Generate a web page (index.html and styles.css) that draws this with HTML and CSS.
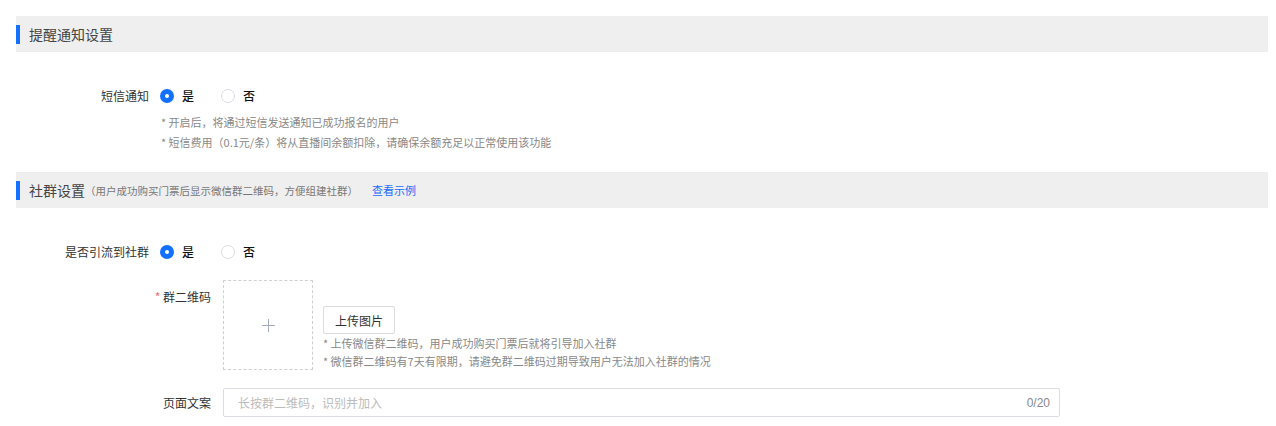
FILE: index.html
```html
<!DOCTYPE html>
<html lang="zh-CN">
<head>
    <meta charset="UTF-8">
    <meta name="viewport" content="width=device-width, initial-scale=1.0">
    <title>提醒与社群设置</title>
    <link rel="stylesheet" href="styles.css">
</head>
<body>
    <div class="section-head">
        <span class="section-title">提醒通知设置</span>
    </div>
    <div class="section-body first">
        <div class="row">
            <label class="label">短信通知</label>
            <div class="radios">
                <span class="radio checked"></span><span class="radio-text">是</span>
                <span class="radio"></span><span class="radio-text">否</span>
            </div>
        </div>
        <div class="tips tips-sms">
            <p>* 开启后，将通过短信发送通知已成功报名的用户</p>
            <p>* 短信费用（0.1元/条）将从直播间余额扣除，请确保余额充足以正常使用该功能</p>
        </div>
    </div>

    <div class="section-head">
        <span class="section-title">社群设置</span>
        <span class="section-sub">（用户成功购买门票后显示微信群二维码，方便组建社群）</span>
        <a class="section-link" href="#">查看示例</a>
    </div>
    <div class="section-body">
        <div class="row">
            <label class="label">是否引流到社群</label>
            <div class="radios">
                <span class="radio checked"></span><span class="radio-text">是</span>
                <span class="radio"></span><span class="radio-text">否</span>
            </div>
        </div>
        <div class="row upload-row">
            <label class="label wide"><span class="req">*</span> 群二维码</label>
            <div class="upload-box">
                <svg width="13" height="13" viewBox="0 0 13 13"><path d="M6.5 0v13M0 6.5h13" stroke="#a4abc0" stroke-width="1" fill="none"/></svg>
            </div>
            <div class="upload-side">
                <button type="button" class="btn">上传图片</button>
                <div class="tips tips-qr">
                    <p>* 上传微信群二维码，用户成功购买门票后就将引导加入社群</p>
                    <p>* 微信群二维码有7天有限期，请避免群二维码过期导致用户无法加入社群的情况</p>
                </div>
            </div>
        </div>
        <div class="row input-row">
            <label class="label wide">页面文案</label>
            <div class="text-input">
                <input type="text" placeholder="长按群二维码，识别并加入">
                <span class="count">0/20</span>
            </div>
        </div>
    </div>
</body>
</html>
```

FILE: styles.css
```css
body {
    margin: 0;
    padding: 16px 8px 0 16px;
    font-family: "Noto Sans CJK SC", "Noto Sans", sans-serif;
    color: #333;
    background: #fff;
}
p {
    margin: 0;
}
.section-head {
    display: flex;
    align-items: center;
    height: 36px;
    background: #efefef;
}
.section-head::before {
    content: "";
    width: 4px;
    height: 19px;
    background: #1470ff;
}
.section-title {
    margin-left: 9px;
    font-size: 14px;
    color: #444;
}
.section-sub {
    font-size: 10.5px;
    color: #777;
}
.section-link {
    margin-left: 14px;
    font-size: 11px;
    color: #1a6bff;
    text-decoration: none;
}
.section-body {
    padding-top: 34px;
}
.section-body.first {
    padding-bottom: 20px;
}
.row {
    display: flex;
    align-items: center;
    font-size: 12px;
    line-height: 20px;
}
.label {
    width: 133px;
    text-align: right;
    margin-right: 11px;
    color: #333;
}
.label.wide {
    width: 195px;
    margin-right: 12px;
}
.req {
    color: #f56c6c;
}
.radios {
    display: flex;
    align-items: center;
}
.radio {
    box-sizing: border-box;
    width: 14px;
    height: 14px;
    border: 1px solid #d9dbe3;
    border-radius: 50%;
    background: #fff;
}
.radio.checked {
    border: none;
    background: #1470ff;
    position: relative;
}
.radio.checked::after {
    content: "";
    position: absolute;
    left: 5px;
    top: 5px;
    width: 4px;
    height: 4px;
    border-radius: 50%;
    background: #fff;
}
.radio-text {
    margin-left: 8px;
    margin-right: 27px;
    color: #111;
    font-weight: 500;
}
.tips {
    font-size: 11px;
    color: #888;
}
.tips-sms {
    margin: 6px 0 0 145px;
    line-height: 20px;
}
.tips-qr {
    line-height: 18px;
    white-space: nowrap;
}
.upload-row {
    align-items: stretch;
    margin-top: 18px;
}
.upload-row .label {
    padding-top: 7px;
}
.upload-box {
    box-sizing: border-box;
    width: 90px;
    height: 90px;
    border: 1px dashed #cfcfcf;
    display: flex;
    align-items: center;
    justify-content: center;
}
.upload-side {
    margin-left: 10px;
    display: flex;
    flex-direction: column;
    justify-content: flex-end;
}
.btn {
    align-self: flex-start;
    width: 72px;
    height: 28px;
    padding: 0;
    border: 1px solid #dcdcdc;
    border-radius: 2px;
    background: #fff;
    font-family: inherit;
    font-size: 12px;
    color: #333;
}
.input-row {
    margin-top: 18px;
}
.text-input {
    box-sizing: border-box;
    display: flex;
    align-items: center;
    width: 837px;
    height: 29px;
    border: 1px solid #dcdde3;
    border-radius: 2px;
    padding: 0 9px 0 14px;
}
.text-input input {
    flex: 1;
    border: none;
    outline: none;
    padding: 0;
    font-family: inherit;
    font-size: 12px;
    color: #333;
}
.text-input input::placeholder {
    color: #bbb;
}
.count {
    font-size: 12px;
    color: #888;
    font-family: "Liberation Sans", sans-serif;
}
```
